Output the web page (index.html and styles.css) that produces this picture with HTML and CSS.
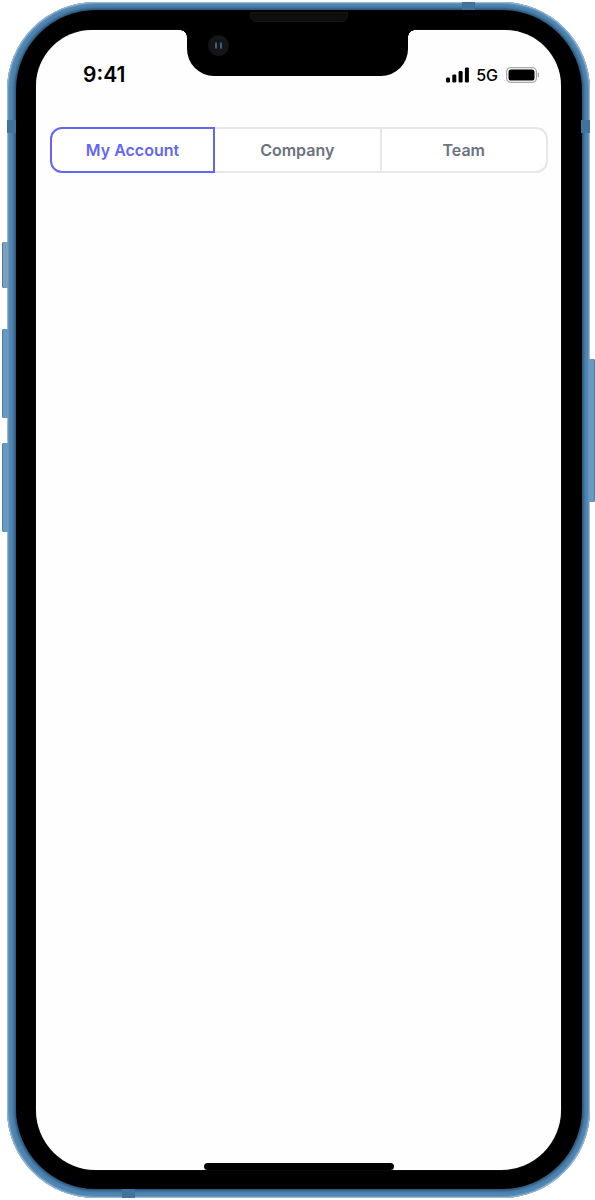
FILE: index.html
```html
<!DOCTYPE html>
<html lang="en">
<head>
    <meta charset="UTF-8">
    <meta name="viewport" content="width=device-width, initial-scale=1.0">
    <title>My Account</title>
    <link rel="stylesheet" href="styles.css">
</head>
<body>
    <div class="phone">
        <span class="side-btn mute"></span>
        <span class="side-btn vol-up"></span>
        <span class="side-btn vol-down"></span>
        <span class="side-btn power"></span>
        <span class="band band-left"></span>
        <span class="band band-right"></span>
        <span class="band band-top"></span>
        <span class="band band-bottom"></span>
        <span class="speaker"></span>

        <div class="bezel">
            <div class="screen">
                <div class="notch">
                    <span class="camera"></span>
                </div>

                <div class="status-bar">
                    <span class="time">9:41</span>
                    <div class="status-icons">
                        <svg class="signal" width="23" height="16" viewBox="0 0 23 16">
                            <rect x="0" y="10.5" width="4" height="5" rx="1.2" fill="#000"/>
                            <rect x="6.3" y="7.5" width="4" height="8" rx="1.2" fill="#000"/>
                            <rect x="12.6" y="4" width="4" height="11.5" rx="1.2" fill="#000"/>
                            <rect x="18.9" y="0.5" width="4" height="15" rx="1.2" fill="#000"/>
                        </svg>
                        <span class="network">5G</span>
                        <svg class="battery" width="33" height="16" viewBox="0 0 33 16">
                            <rect x="0.6" y="0.6" width="29.8" height="14.8" rx="4.2" fill="none" stroke="#a8a8a8" stroke-width="1.2"/>
                            <rect x="2.5" y="2.5" width="26" height="11" rx="2.6" fill="#000"/>
                            <rect x="31.6" y="5.8" width="1.4" height="4.4" rx="0.7" fill="#a8a8a8"/>
                        </svg>
                    </div>
                </div>

                <div class="tabs">
                    <button class="tab active">My Account</button>
                    <button class="tab">Company</button>
                    <button class="tab">Team</button>
                </div>

                <span class="home-indicator"></span>
            </div>
        </div>
    </div>
</body>
</html>
```

FILE: styles.css
```css
* {
    margin: 0;
    padding: 0;
    box-sizing: border-box;
}

body {
    background: white;
    font-family: Inter, "Liberation Sans", sans-serif;
}

/* Phone frame */
.phone {
    position: relative;
    width: 583px;
    height: 1196px;
    margin: 2px 0 2px 7px;
    padding: 8px 8px 9px 9px;
    background: #4f86b3;
    border-radius: 88px;
    box-shadow: inset 0 0 0 1px #9dbad1, inset 0 0 1px 2px #6496be;
}

.bezel {
    height: 100%;
    padding: 20px 21px 19px 20px;
    background: black;
    border-radius: 80px;
    box-shadow: 0 0 3px 2px #2c5577;
}

.screen {
    position: relative;
    height: 100%;
    background: #fefefe;
    border-radius: 56px 56px 60px 60px;
    box-shadow: 0 0 1px #666;
}

/* Side buttons */
.side-btn {
    position: absolute;
    width: 6px;
    background: #6a98be;
    border-radius: 2px 0 0 2px;
    box-shadow: inset 1px 0 0 #4b7da6;
}

.mute {
    left: -5px;
    top: 240px;
    height: 46px;
    background: #7d9fbb;
}

.vol-up {
    left: -5px;
    top: 327px;
    height: 89px;
}

.vol-down {
    left: -5px;
    top: 441px;
    height: 89px;
}

.power {
    right: -5px;
    top: 357px;
    height: 143px;
    border-radius: 0 2px 2px 0;
    box-shadow: inset -1px 0 0 #4b7da6;
}

/* Antenna bands */
.band {
    position: absolute;
    background: #41739d;
}

.band-left {
    left: 0;
    top: 118px;
    width: 9px;
    height: 13px;
}

.band-right {
    right: 0;
    top: 118px;
    width: 9px;
    height: 13px;
}

.band-top {
    left: 455px;
    top: 0;
    width: 13px;
    height: 8px;
}

.band-bottom {
    left: 115px;
    bottom: 0;
    width: 13px;
    height: 9px;
}

.speaker {
    position: absolute;
    z-index: 2;
    left: 243px;
    top: 10px;
    width: 98px;
    height: 10px;
    background: #0e0e0e;
    border: 1px solid #161616;
    border-radius: 0 0 6px 6px;
}

/* Notch */
.notch {
    position: absolute;
    left: 151px;
    top: -1px;
    width: 221px;
    height: 47px;
    background: black;
    border-radius: 0 0 27px 27px;
}

.notch::before,
.notch::after {
    content: "";
    position: absolute;
    top: 1px;
    width: 7px;
    height: 7px;
}

.notch::before {
    left: -7px;
    background: radial-gradient(circle at 0 100%, transparent 6.5px, black 7px);
}

.notch::after {
    right: -7px;
    background: radial-gradient(circle at 100% 100%, transparent 6.5px, black 7px);
}

.camera {
    position: absolute;
    left: 21px;
    top: 6px;
    width: 21px;
    height: 21px;
    background: #131518;
    border-radius: 50%;
}

.camera::before,
.camera::after {
    content: "";
    position: absolute;
    top: 7px;
    width: 2px;
    height: 7px;
    background: #44627a;
    border-radius: 50%;
}

.camera::before {
    left: 7px;
}

.camera::after {
    left: 12px;
}

/* Status bar */
.status-bar {
    display: flex;
    justify-content: space-between;
    align-items: center;
    height: 67px;
    padding: 22px 22px 0 47px;
}

.time {
    font-size: 21px;
    font-weight: 600;
    color: black;
}

.status-icons {
    display: flex;
    align-items: center;
    gap: 7px;
}

.network {
    font-size: 16px;
    font-weight: 500;
    color: black;
    margin-right: 1px;
}

/* Tabs */
.tabs {
    display: flex;
    height: 46px;
    margin: 30px 13px 0 14px;
}

.tab {
    flex: 1;
    background: white;
    border: 2px solid #e5e7eb;
    border-left: none;
    font-family: Inter, "Liberation Sans", sans-serif;
    font-size: 16px;
    font-weight: 600;
    color: #6b7280;
}

.tab:last-child {
    border-radius: 0 12px 12px 0;
}

.tab.active {
    flex: 0 0 165px;
    border: 2px solid #6366f1;
    border-radius: 12px 0 0 12px;
    color: #6366f1;
}

.home-indicator {
    position: absolute;
    left: 168px;
    bottom: 0;
    width: 190px;
    height: 7px;
    background: black;
    border-radius: 4px;
}
```
